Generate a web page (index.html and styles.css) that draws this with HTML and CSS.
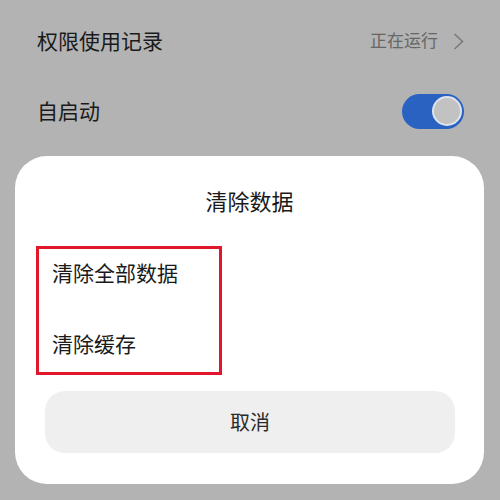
FILE: index.html
```html
<!DOCTYPE html>
<html lang="zh-CN">
<head>
<meta charset="utf-8">
<link rel="stylesheet" href="styles.css">
</head>
<body>
<div class="settings">
  <div class="row">
    <span class="label">权限使用记录</span>
    <span class="value">
      <span class="status">正在运行</span>
      <svg class="chevron" width="11" height="17" viewBox="0 0 11 17"><polyline points="1.5,1 9.5,8.5 1.5,16" fill="none" stroke="#7a7a7a" stroke-width="1.6"/></svg>
    </span>
  </div>
  <div class="row">
    <span class="label">自启动</span>
    <span class="toggle"><span class="knob"></span></span>
  </div>
</div>
<div class="sheet">
  <div class="title">清除数据</div>
  <div class="options">
    <div class="option">清除全部数据</div>
    <div class="option">清除缓存</div>
  </div>
  <div class="cancel">取消</div>
</div>
</body>
</html>
```
FILE: styles.css
```css
html, body {
  margin: 0;
  padding: 0;
  background: #b3b3b3;
  width: 500px;
  height: 500px;
  overflow: hidden;
  font-family: "Noto Sans CJK SC", "Noto Sans", sans-serif;
  color: #1a1a1a;
}
.settings {
  padding: 5px 36px 2px 37px;
}
.row {
  height: 70px;
  display: flex;
  align-items: center;
  justify-content: space-between;
}
.label {
  font-size: 21px;
  line-height: 30px;
}
.value {
  display: flex;
  align-items: center;
  gap: 15px;
}
.status {
  font-size: 17px;
  color: #666666;
  line-height: 24px;
}
.chevron {
  display: block;
  margin-top: 2px;
}
.toggle {
  width: 62px;
  height: 35px;
  border-radius: 18px;
  background: #2a62c2;
  display: flex;
  align-items: center;
  justify-content: flex-end;
  padding-right: 4px;
  box-sizing: border-box;
  margin-top: 2px;
}
.knob {
  width: 26px;
  height: 26px;
  border-radius: 50%;
  background: #c2c2c2;
  box-shadow: 0 0 0 2px #dfe4ee;
}
.sheet {
  margin: 9px 16px 0 15px;
  height: 328px;
  box-sizing: border-box;
  background: #ffffff;
  border-radius: 32px;
  padding: 29px 29px 0 21px;
}
.title {
  text-align: center;
  font-size: 22px;
  line-height: 30px;
  padding-left: 8px;
}
.options {
  margin-top: 31px;
  width: 186px;
  height: 129px;
  box-sizing: border-box;
  border: 3px solid #e0172b;
  padding: 8px 0 0 13px;
  display: flex;
  flex-direction: column;
  gap: 41px;
}
.option {
  font-size: 21px;
  line-height: 30px;
}
.cancel {
  margin: 16px 0 0 9px;
  height: 62px;
  border-radius: 20px;
  background: #efefef;
  display: flex;
  align-items: center;
  justify-content: center;
  font-size: 20px;
  color: #2a2a2a;
  padding-bottom: 2px;
  box-sizing: border-box;
}
```
